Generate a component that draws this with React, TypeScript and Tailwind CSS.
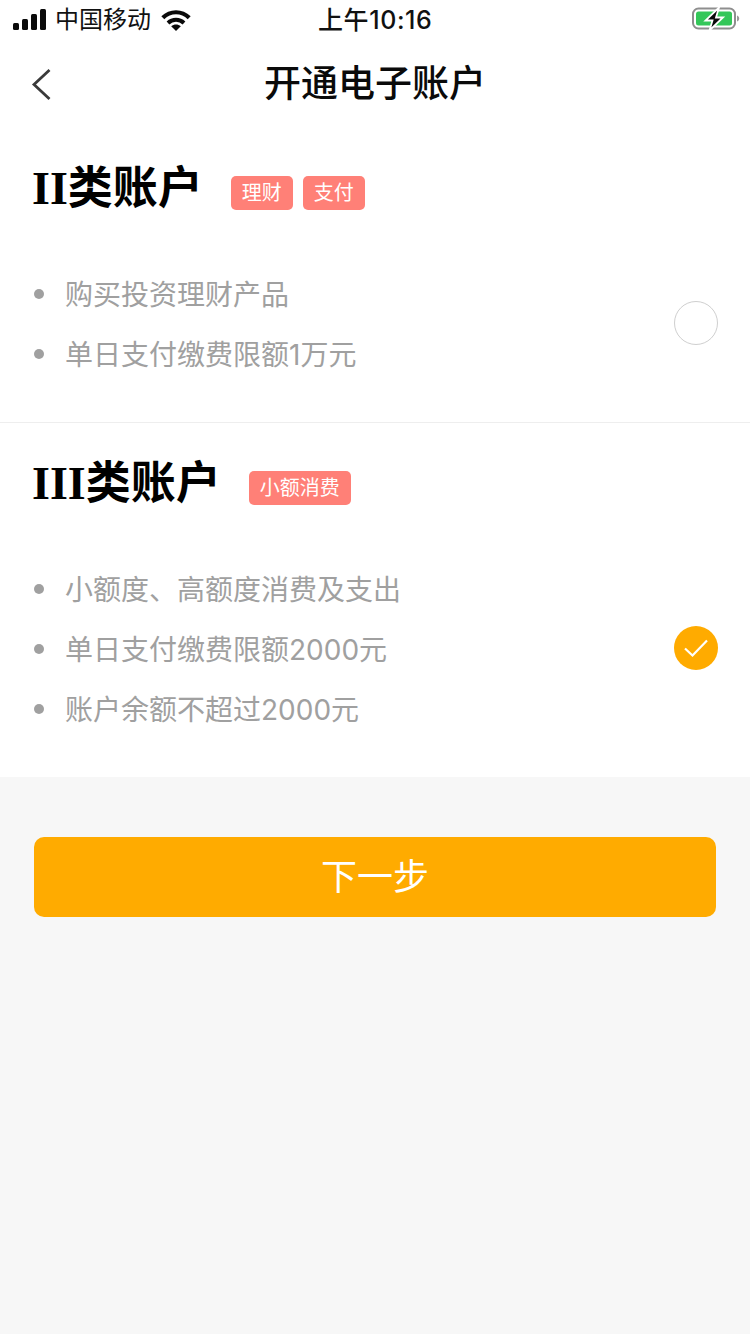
const ACCOUNTS = [
  {
    id: "ii",
    name: "II",
    tags: ["理财", "支付"],
    items: ["购买投资理财产品", "单日支付缴费限额1万元"],
    checked: false,
  },
  {
    id: "iii",
    name: "III",
    tags: ["小额消费"],
    items: ["小额度、高额度消费及支出", "单日支付缴费限额2000元", "账户余额不超过2000元"],
    checked: true,
  },
];

function StatusBar() {
  return (
    <div className="relative flex h-10 items-center justify-between pl-[13px] pr-[10px]">
      <div className="flex items-center">
        <svg width="33" height="22" viewBox="0 0 33 22" fill="#0a0a0a">
          <rect x="0" y="14" width="6" height="7" rx="1.5" />
          <rect x="9" y="10" width="6" height="11" rx="1.5" />
          <rect x="18" y="5" width="6" height="16" rx="1.5" />
          <rect x="27" y="0" width="6" height="21" rx="1.5" />
        </svg>
        <span className="ml-[9px] text-[24px] leading-none text-[#111]">中国移动</span>
        <svg className="ml-[10px]" width="30" height="22" viewBox="0 0 30 22" fill="none">
          <path d="M1.8 8.8C9.3 1.4 20.7 1.4 28.2 8.8" stroke="#0a0a0a" strokeWidth="4.2" />
          <path d="M7 14C11.5 9.8 18.5 9.8 23 14" stroke="#0a0a0a" strokeWidth="4" />
          <path d="M10.2 17.2L15 22L19.8 17.2C17 15 13 15 10.2 17.2Z" fill="#0a0a0a" />
        </svg>
      </div>
      <span className="absolute left-[318px] top-[5px] text-[25px] font-medium leading-[30px] tracking-[0.6px] text-[#111]">上午10:16</span>
      <svg className="-translate-y-px" width="48" height="24" viewBox="0 0 48 24" fill="none">
        <rect x="1" y="1.5" width="42" height="20" rx="5.5" stroke="#8e8e8e" strokeWidth="2" />
        <rect x="4" y="4.5" width="36" height="14" rx="2.5" fill="#34c759" />
        <path d="M45 8.5C46.5 9 47.2 10.1 47.2 11.5C47.2 12.9 46.5 14 45 14.5Z" fill="#9a9a9a" />
        <path d="M27 0.5L13.5 13.5H20.5L17.5 23.5L31 10.5H24Z" fill="#0a0a0a" stroke="#fff" strokeWidth="1.8" />
      </svg>
    </div>
  );
}

function Radio({ checked }: { checked: boolean }) {
  if (checked) {
    return (
      <div className="flex h-11 w-11 -translate-y-px items-center justify-center rounded-full bg-[#ffab00]">
        <svg width="26" height="20" viewBox="0 0 26 20" fill="none">
          <path d="M2 10.5L9.5 17.5L24 2.5" stroke="#fff" strokeWidth="2.2" />
        </svg>
      </div>
    );
  }
  return <div className="h-11 w-11 -translate-y-px rounded-full border border-[#cfcfcf] bg-white" />;
}

export default function App() {
  return (
    <div className="flex min-h-[1334px] w-[750px] flex-col bg-[#f7f7f7] font-['Inter','Noto_Sans_CJK_SC',sans-serif]">
      <div className="bg-white">
        <StatusBar />
        <div className="relative flex h-[88px] items-start justify-center pt-[25px]">
          <svg className="absolute left-[30px] top-[27px]" width="24" height="36" viewBox="0 0 24 36" fill="none">
            <path d="M19.5 3L4 17.5L19.5 32" stroke="#3a3a3a" strokeWidth="2.8" />
          </svg>
          <h1 className="text-[37px] font-medium leading-none text-[#0a0a0a]">开通电子账户</h1>
        </div>

        {ACCOUNTS.map((a, i) => (
          <section key={a.id} className={i === 0 ? "border-b border-[#eeeeee] pb-[38px]" : "pb-[38px]"}>
            <div className="flex h-[135px] items-start pl-[32px] pt-[36px]">
              <h2 className="text-[45px] font-bold leading-[48px] text-black">
                <span className="font-['Liberation_Serif',serif] text-[46px]">{a.name}</span>
                类账户
              </h2>
              <div className="ml-[28px] mt-[12px] flex gap-[10px]">
                {a.tags.map((t) => (
                  <span
                    key={t}
                    className="flex h-[34px] items-center rounded-[5px] bg-[#ff8077] px-[11px] text-[20px] leading-none text-white"
                  >
                    {t}
                  </span>
                ))}
              </div>
            </div>
            <div className="flex items-center pl-[34px] pr-[32px] pt-[1px]">
              <ul className="flex flex-1 flex-col">
                {a.items.map((item) => (
                  <li key={item} className="flex h-[60px] items-center">
                    <span className="h-[10px] w-[10px] rounded-full bg-[#a0a0a0]" />
                    <span className="ml-[21px] translate-y-px text-[28px] leading-none text-[#a0a0a0]">{item}</span>
                  </li>
                ))}
              </ul>
              <Radio checked={a.checked} />
            </div>
          </section>
        ))}
      </div>

      <button className="mx-[34px] mt-[60px] flex h-20 items-center justify-center rounded-[10px] bg-[#ffab00] text-[36px] leading-none text-white">
        下一步
      </button>
    </div>
  );
}
